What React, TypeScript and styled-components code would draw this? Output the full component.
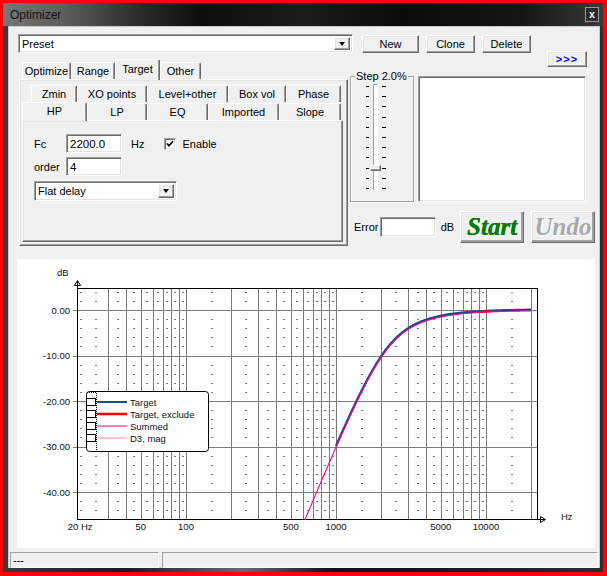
import React from 'react'
import styled, { createGlobalStyle, css } from 'styled-components'

const GlobalStyle = createGlobalStyle`
	html, body {
		margin: 0;
		padding: 0;
		background: #ff0000;
	}
	body {
		font-family: "Liberation Sans", Arial, sans-serif;
		font-size: 11px;
		color: #000;
	}
`

const raised = css`
	border: 1px solid;
	border-color: #fff #696969 #696969 #fff;
	box-shadow: inset -1px -1px 0 #a0a0a0, inset 1px 1px 0 #e3e3e3;
	background: #f0f0f0;
`
const sunken = css`
	border: 1px solid;
	border-color: #a0a0a0 #fff #fff #a0a0a0;
	box-shadow: inset 1px 1px 0 #696969, inset -1px -1px 0 #e3e3e3;
	background: #fff;
`

const Frame = styled.div`
	width: 607px;
	height: 576px;
	box-sizing: border-box;
	border-style: solid;
	border-color: #ff0000;
	border-width: 3px 4px 4px 3px;
`
const Window = styled.div`
	height: 100%;
	box-sizing: border-box;
	display: flex;
	flex-direction: column;
	padding: 0 3px 4px 5px;
	background: linear-gradient(90deg, #3a3a3a 0%, #1a1a1a 20%, #6a6a6a 40%, #101010 55%, #1c1c1c 80%, #2e2e2e 100%);
`
const TitleBar = styled.div`
	height: 23px;
	display: flex;
	align-items: center;
	justify-content: space-between;
	margin: 0 -3px 0 -5px;
	padding: 0 4px 0 7px;
	background: linear-gradient(90deg, #767676 0, #5e5e5e 60px, #2a2a2a 140px, #0e0e0c 200px, #1c1c1a 300px, #0b0b0b 400px, #161616 520px, #3a3a3a 100%);
`
const Title = styled.span`
	font-size: 12px;
	color: #121212;
`
const CloseBtn = styled.div`
	width: 14px;
	height: 15px;
	box-sizing: border-box;
	border: 1px solid #9a9a9a;
	background: #2a2a2a;
	color: #fff;
	font-weight: bold;
	font-size: 10px;
	display: flex;
	align-items: center;
	justify-content: center;
`
const Client = styled.div`
	flex: 1;
	display: flex;
	flex-direction: column;
	background: #f0f0f0;
	box-shadow: inset 0 0 0 1px #c8c8c8;
`
const TopRow = styled.div`
	display: flex;
	align-items: flex-start;
	height: 19px;
	margin: 8px 0 0 10px;
`
const Combo = styled.div<{ $w: number; $h?: number }>`
	${sunken};
	box-sizing: border-box;
	width: ${p => p.$w}px;
	height: ${p => p.$h ?? 19}px;
	padding: 2px;
	display: flex;
`
const ComboText = styled.span`
	flex: 1;
	display: flex;
	align-items: center;
	padding-left: 1px;
`
const DropBtn = styled.span`
	${raised};
	box-sizing: border-box;
	width: 16px;
	display: flex;
	align-items: center;
	justify-content: center;
`
const Arrow = styled.span`
	width: 0;
	height: 0;
	border-left: 3.5px solid transparent;
	border-right: 3.5px solid transparent;
	border-top: 4px solid #000;
`
const Button = styled.button<{ $w: number; $h?: number; $ml?: number }>`
	${raised};
	box-sizing: border-box;
	width: ${p => p.$w}px;
	height: ${p => p.$h ?? 18}px;
	margin-left: ${p => p.$ml ?? 0}px;
	padding: 0;
	font-family: "Liberation Sans", Arial, sans-serif;
	font-size: 11px;
	color: #000;
	display: flex;
	align-items: center;
	justify-content: center;
`
const TopButton = styled(Button)`
	margin-top: 1px;
`
const MainRow = styled.div`
	display: flex;
	align-items: flex-start;
	margin: -2px 0 0 11px;
`
const LeftCol = styled.div`
	width: 329px;
	padding-top: 8px;
`
const TabStrip = styled.div<{ $pl?: number; $h: number }>`
	display: flex;
	align-items: flex-end;
	height: ${p => p.$h}px;
	padding-left: ${p => p.$pl ?? 0}px;
`
const Tab = styled.div<{ $w: number; $active?: boolean; $h: number }>`
	box-sizing: border-box;
	width: ${p => p.$w}px;
	height: ${p => p.$h}px;
	display: flex;
	align-items: center;
	justify-content: center;
	border: 1px solid;
	border-bottom: none;
	border-color: #fff #696969 transparent #fff;
	box-shadow: inset -1px 0 0 #a0a0a0;
	border-radius: 2px 2px 0 0;
	background: #f0f0f0;
	${p =>
		p.$active &&
		css`
			position: relative;
			z-index: 1;
			margin-bottom: -1px;
			padding-bottom: 2px;
		`}
`
const OuterPanel = styled.div`
	${raised};
	box-sizing: border-box;
	height: 167px;
	padding: 5px 0 0 2px;
`
const InnerTabs = styled.div`
	width: 321px;
`
const InnerPanel = styled.div`
	${raised};
	box-sizing: border-box;
	height: 122px;
	padding: 13px 0 0 11px;
`
const FieldRow = styled.div<{ $mt?: number }>`
	display: flex;
	align-items: center;
	height: 19px;
	margin-top: ${p => p.$mt ?? 0}px;
`
const FieldLabel = styled.span`
	width: 32px;
	font-size: 11px;
`
const Edit = styled.div<{ $w: number; $h?: number }>`
	${sunken};
	box-sizing: border-box;
	width: ${p => p.$w}px;
	height: ${p => p.$h ?? 19}px;
	padding: 0 3px;
	display: flex;
	align-items: center;
	font-size: 11.5px;
`
const Unit = styled.span<{ $ml: number }>`
	margin-left: ${p => p.$ml}px;
	font-size: 11px;
`
const Check = styled.span`
	${sunken};
	box-sizing: border-box;
	width: 12px;
	height: 12px;
	margin-left: 20px;
	display: flex;
	align-items: center;
	justify-content: center;
`
const RightCol = styled.div`
	width: 245px;
	margin-left: 2px;
	display: flex;
	flex-direction: column;
`
const MoreRow = styled.div`
	display: flex;
	justify-content: flex-end;
	padding-right: 8px;
`
const MoreBtn = styled(Button)`
	color: #0000ff;
	font-weight: bold;
	letter-spacing: 1px;
	font-size: 11px;
`
const MidRow = styled.div`
	display: flex;
	align-items: flex-start;
	margin-top: 3px;
`
const Group = styled.fieldset`
	box-sizing: border-box;
	width: 64px;
	height: 132px;
	margin: 0;
	padding: 0;
	border: 1px solid #a0a0a0;
	box-shadow: inset 1px 1px 0 #fff, 1px 1px 0 #fff;
	min-inline-size: 0;
`
const Legend = styled.legend`
	padding: 0 1px;
	margin-left: 4px;
	background: #f0f0f0;
	font-size: 11px;
	line-height: 13px;
	white-space: nowrap;
`
const SliderRow = styled.div`
	display: flex;
	height: 107px;
	margin-top: 1px;
	padding-left: 15px;
`
const Ticks = styled.div<{ $w: number }>`
	width: ${p => p.$w}px;
	height: 103px;
	margin-top: 2px;
	display: flex;
	flex-direction: column;
	justify-content: space-between;
`
const Tick = styled.span`
	display: block;
	height: 1px;
	background: #000;
`
const Track = styled.div`
	position: relative;
	box-sizing: border-box;
	width: 5px;
	height: 107px;
	margin: 0 4px 0 4px;
	border: 1px solid;
	border-color: #a0a0a0 #fff #fff #a0a0a0;
	background: #fff;
`
const Thumb = styled.span`
	${raised};
	position: absolute;
	left: -4px;
	top: 80px;
	box-sizing: border-box;
	width: 11px;
	height: 6px;
`
const ListBox = styled.div`
	${sunken};
	box-sizing: border-box;
	width: 168px;
	height: 126px;
	margin: 6px 0 0 4px;
`
const ErrorRow = styled.div`
	display: flex;
	align-items: center;
	height: 32px;
	margin-top: 9px;
	padding-left: 4px;
	font-size: 11px;
`
const BigButton = styled(Button)<{ $disabled?: boolean }>`
	box-shadow: inset -2px -2px 0 #a0a0a0, inset 1px 1px 0 #e3e3e3;
	font-family: "Liberation Serif", "Times New Roman", serif;
	font-weight: bold;
	font-style: italic;
	font-size: 25px;
	color: ${p => (p.$disabled ? '#a8a8a8' : '#008000')};
	text-shadow: ${p => (p.$disabled ? '1px 1px 0 #fff' : '0 0 0.5px #003000')};
`
const ChartPanel = styled.div`
	width: 578px;
	height: 289px;
	margin: 13px 0 0 9px;
	background: #fff;
`
const StatusBar = styled.div`
	display: flex;
	gap: 3px;
	height: 16px;
	margin: 4px 0 0 2px;
`
const StatusPanel = styled.div<{ $w: number }>`
	box-sizing: border-box;
	width: ${p => p.$w}px;
	border: 1px solid;
	border-color: #a0a0a0 #fff #fff #a0a0a0;
	padding-left: 2px;
	display: flex;
	align-items: center;
	font-size: 11px;
`

/* chart helpers */
const X = (f: number) => 319 + 150 * Math.log10(f / 1000)
const Y = (db: number) => 51 - 4.55 * db
const besselHp = (f: number) => {
	const w = 7400 / f
	const w2 = w * w
	const re = w2 * w2 - 45 * w2 + 105
	const im = -10 * w2 * w + 105 * w
	return 20 * Math.log10(105 / Math.hypot(re, im))
}
const curve = (f0: number, f1: number, dy = 0) => {
	const pts: string[] = []
	for (let x = X(f0); x <= X(f1) + 0.01; x += 1) {
		const f = 1000 * Math.pow(10, (x - 319) / 150)
		pts.push(`${x.toFixed(1)},${(Y(besselHp(f)) + dy).toFixed(1)}`)
	}
	return pts.join(' ')
}

const majorF: number[] = []
const minorF: number[] = [20]
;[10, 100, 1000].forEach(d => {
	for (let m = 1; m <= 9; m++) if (m * d >= 30) majorF.push(m * d)
	for (let m = 1.5; m < 10; m++) if (m * d >= 25) minorF.push(m * d)
})
majorF.push(10000, 20000)
minorF.push(15000)
const minorDb: number[] = []
for (let db = 4; db >= -44; db -= 2) if (db % 10 !== 0) minorDb.push(db)

const legend = [
	{ label: 'Target', color: '#1a4a8a', w: 2 },
	{ label: 'Target, exclude', color: '#ff0000', w: 2.5 },
	{ label: 'Summed', color: '#ff0080', w: 1 },
	{ label: 'D3, mag', color: '#ff8a9a', w: 1 },
]

const Chart = () => {
	const font = { fontFamily: '"Liberation Sans", Arial, sans-serif', fontSize: 9.5 }
	return (
		<svg width="578" height="289" style={{ display: 'block' }}>
			<defs>
				<clipPath id="plot">
					<rect x="60" y="29" width="461" height="232" />
				</clipPath>
			</defs>
			<g shapeRendering="crispEdges">
				{minorF.map(f =>
					minorDb.map(db => (
						<rect key={`${f}_${db}`} x={Math.round(X(f)) - 1} y={Math.round(Y(db))} width="2" height="1" fill="#7a7a7a" />
					))
				)}
				{majorF.map(f => (
					<line key={f} x1={Math.round(X(f)) + 0.5} x2={Math.round(X(f)) + 0.5} y1="29" y2="260" stroke="#7a7a7a" />
				))}
				{[0, -10, -20, -30, -40].map(db => (
					<line key={db} x1="56" x2="520" y1={Math.round(Y(db)) + 0.5} y2={Math.round(Y(db)) + 0.5} stroke="#7a7a7a" />
				))}
				<rect x="60.5" y="29.5" width="460" height="231" fill="none" stroke="#000" />
				<line x1="60.5" x2="60.5" y1="22" y2="261" stroke="#000" />
				<line x1="60" x2="528" y1="260.5" y2="260.5" stroke="#000" />
			</g>
			<path d="M57.5,26.5 L60.5,21.5 L63.5,26.5 Z" fill="none" stroke="#000" />
			<path d="M523.5,257.5 L528.5,260.5 L523.5,263.5 Z" fill="none" stroke="#000" />
			<g clipPath="url(#plot)" fill="none">
				<polyline points={curve(1000, 20000, -0.6)} stroke="#1a4a8a" strokeWidth="2.4" />
				<polyline points={curve(8600, 11000)} stroke="#ff0000" strokeWidth="2" />
				<polyline points={curve(580, 20000, 0.5)} stroke="#ff0080" strokeWidth="1.1" />
			</g>
			<g {...font} fill="#111">
				<text x="40" y="17">dB</text>
				{[0, -10, -20, -30, -40].map(db => (
					<text key={db} x="53" y={Y(db) + 3.5} textAnchor="end">
						{db.toFixed(2)}
					</text>
				))}
				{[
					['20 Hz', 20],
					['50', 50],
					['100', 100],
					['500', 500],
					['1000', 1000],
					['5000', 5000],
					['10000', 10000],
				].map(([t, f]) => (
					<text key={t} x={X(f as number) - (t === '20 Hz' ? 1 : 0)} y="271" textAnchor="middle">
						{t}
					</text>
				))}
				<text x="544" y="261">Hz</text>
			</g>
			<g>
				<rect x="69.5" y="132.5" width="122" height="60" rx="3" fill="#fff" stroke="#000" />
				<path d="M70 133.5 H79.5 V192" fill="none" stroke="#000" strokeDasharray="1 1" />
				{legend.map((l, i) => {
					const cy = 143 + i * 12
					return (
						<g key={l.label}>
							<rect x="69.5" y={cy - 3.5} width="9" height="7" fill="#fff" stroke="#000" shapeRendering="crispEdges" />
							<line x1="80" x2="110" y1={cy} y2={cy} stroke={l.color} strokeWidth={l.w} />
							<text x="113" y={cy + 3.5} {...font} fill="#111">
								{l.label}
							</text>
						</g>
					)
				})}
			</g>
		</svg>
	)
}

const outerTabs = [
	{ t: 'Optimize', w: 49 },
	{ t: 'Range', w: 44 },
	{ t: 'Target', w: 45, active: true },
	{ t: 'Other', w: 41 },
]
const innerRow1 = [
	{ t: 'Zmin', w: 46 },
	{ t: 'XO points', w: 70 },
	{ t: 'Level+other', w: 81 },
	{ t: 'Box vol', w: 58 },
	{ t: 'Phase', w: 55 },
]
const innerRow2 = [
	{ t: 'HP', w: 65, active: true },
	{ t: 'LP', w: 60 },
	{ t: 'EQ', w: 61 },
	{ t: 'Imported', w: 71 },
	{ t: 'Slope', w: 62 },
]

export default function App() {
	return (
		<Frame>
			<GlobalStyle />
			<Window>
				<TitleBar>
					<Title>Optimizer</Title>
					<CloseBtn>x</CloseBtn>
				</TitleBar>
				<Client>
					<TopRow>
						<Combo $w={335}>
							<ComboText>Preset</ComboText>
							<DropBtn>
								<Arrow />
							</DropBtn>
						</Combo>
						<TopButton $w={57} $ml={9}>New</TopButton>
						<TopButton $w={49} $ml={7}>Clone</TopButton>
						<TopButton $w={49} $ml={7}>Delete</TopButton>
					</TopRow>
					<MainRow>
						<LeftCol>
							<TabStrip $h={20} $pl={3}>
								{outerTabs.map(tb => (
									<Tab key={tb.t} $w={tb.w} $h={tb.active ? 21 : 17} $active={tb.active}>
										{tb.t}
									</Tab>
								))}
							</TabStrip>
							<OuterPanel>
								<InnerTabs>
									<TabStrip $h={17} $pl={9}>
										{innerRow1.map(tb => (
											<Tab key={tb.t} $w={tb.w} $h={17}>
												{tb.t}
											</Tab>
										))}
									</TabStrip>
									<TabStrip $h={18}>
										{innerRow2.map(tb => (
											<Tab key={tb.t} $w={tb.w} $h={tb.active ? 19 : 17} $active={tb.active}>
												{tb.t}
											</Tab>
										))}
									</TabStrip>
									<InnerPanel>
										<FieldRow>
											<FieldLabel>Fc</FieldLabel>
											<Edit $w={56}>2200.0</Edit>
											<Unit $ml={9}>Hz</Unit>
											<Check>
												<svg width="8" height="8" viewBox="0 0 8 8">
													<polyline points="1,3.5 3,5.8 7,1.2" fill="none" stroke="#000" strokeWidth="1.7" />
												</svg>
											</Check>
											<Unit $ml={6}>Enable</Unit>
										</FieldRow>
										<FieldRow $mt={4}>
											<FieldLabel>order</FieldLabel>
											<Edit $w={56}>4</Edit>
										</FieldRow>
										<FieldRow $mt={5}>
											<Combo $w={143} $h={20}>
												<ComboText>Flat delay</ComboText>
												<DropBtn>
													<Arrow />
												</DropBtn>
											</Combo>
										</FieldRow>
									</InnerPanel>
								</InnerTabs>
							</OuterPanel>
						</LeftCol>
						<RightCol>
							<MoreRow>
								<MoreBtn $w={40} $h={16}>&gt;&gt;&gt;</MoreBtn>
							</MoreRow>
							<MidRow>
								<Group>
									<Legend>Step 2.0%</Legend>
									<SliderRow>
										<Ticks $w={3}>
											{Array.from({ length: 11 }, (_, i) => (
												<Tick key={i} />
											))}
										</Ticks>
										<Track>
											<Thumb />
										</Track>
										<Ticks $w={4}>
											{Array.from({ length: 11 }, (_, i) => (
												<Tick key={i} />
											))}
										</Ticks>
									</SliderRow>
								</Group>
								<ListBox />
							</MidRow>
							<ErrorRow>
								<span>Error</span>
								<Edit $w={56} $h={20} style={{ marginLeft: 2 }} />
								<Unit $ml={5}>dB</Unit>
								<BigButton $w={65} $h={32} $ml={6}>Start</BigButton>
								<BigButton $w={65} $h={32} $ml={7} $disabled>
									Undo
								</BigButton>
							</ErrorRow>
						</RightCol>
					</MainRow>
					<ChartPanel>
						<Chart />
					</ChartPanel>
					<StatusBar>
						<StatusPanel $w={149}>---</StatusPanel>
						<StatusPanel $w={436} />
					</StatusBar>
				</Client>
			</Window>
		</Frame>
	)
}
